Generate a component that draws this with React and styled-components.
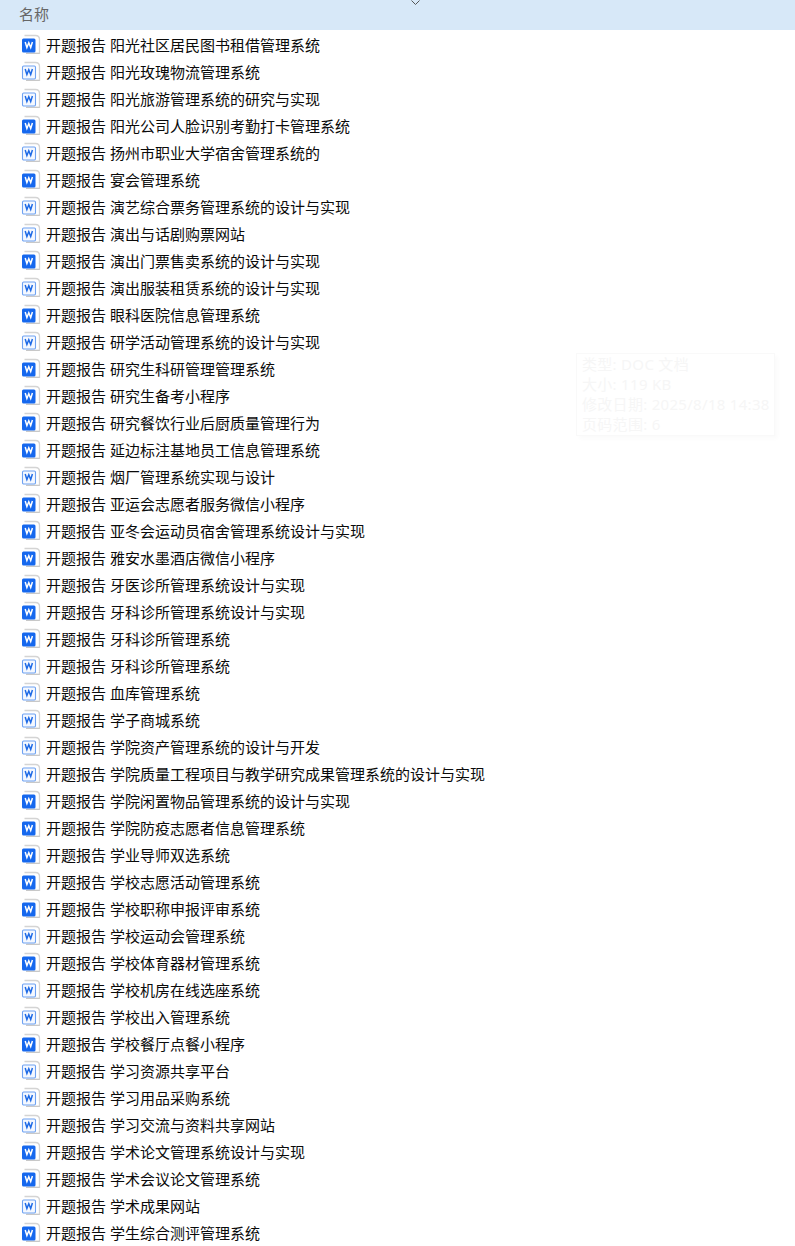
import React from "react";
import styled, { createGlobalStyle } from "styled-components";

const GlobalStyle = createGlobalStyle`
  html, body { margin: 0; padding: 0; background: #fff; overflow: hidden; }
  body { width: 795px; height: 1246px; }
`;
const Page = styled.div`
  position: relative; width: 795px; height: 1246px; overflow: hidden; background: #fff;
  font-family: "Noto Sans CJK SC", "Liberation Sans", sans-serif;
`;
const Header = styled.div`
  position: relative; height: 30px; background: #d7e8f8; color: #666; font-size: 15px;
  line-height: 27px; padding-left: 19px;
`;
const Chevron = styled.svg`
  position: absolute; left: 410px; top: 0; width: 11px; height: 6px;
`;
const List = styled.ul`
  list-style: none; margin: 0; padding: 1px 0 0 21px;
`;
const Row = styled.li`
  display: flex; align-items: center; height: 27px; gap: 5px;
`;
const IconSvg = styled.svg`
  flex: none; width: 20px; height: 20px; margin-bottom: 2px;
`;
const Name = styled.span`
  font-size: 15px; line-height: 27px; color: #0a0a0a; word-spacing: 0.6px; white-space: nowrap;
`;
const Tip = styled.div`
  position: absolute; left: 576px; top: 353px; width: 199px; height: 83px; box-sizing: border-box;
  border: 1px solid #f9f9f9; background: #fff; box-shadow: 3px 3px 4px rgba(0,0,0,0.02);
  padding: 0 5px; color: #f6f6f6; font-size: 15px; line-height: 20px;
  font-family: "Noto Sans", "Noto Sans CJK SC", sans-serif; letter-spacing: 0.3px;
`;
const TipLine = styled.div`white-space: nowrap;`;

const DocIcon = ({ solid }) => (
  <IconSvg viewBox="0 0 20 20" fill="none">
    <path d="M3.5 1.5H14.5C17 1.5 18.5 3 18.5 5.5V19.5H5.5" fill="#fff" stroke="#d4d4d4" strokeWidth="1.3" />
    <path d="M5 19.5H18.5" stroke="#c8c8c8" strokeWidth="1.3" />
    {solid ? (
      <rect x="1" y="4.5" width="13.5" height="14" rx="1.5" fill="#1668ee" />
    ) : (
      <rect x="1.5" y="5" width="13" height="13" rx="1.2" fill="#f4f8ff" stroke="#6ea2f2" strokeWidth="1.1" />
    )}
    <path
      d="M4.2 8 5.9 13.6 7.8 8.8 9.7 13.6 11.4 8"
      stroke={solid ? "#fff" : "#1e6ae6"}
      strokeWidth="1.5"
    />
  </IconSvg>
);

const rows = [
  ["阳光社区居民图书租借管理系统", 1],
  ["阳光玫瑰物流管理系统", 0],
  ["阳光旅游管理系统的研究与实现", 0],
  ["阳光公司人脸识别考勤打卡管理系统", 1],
  ["扬州市职业大学宿舍管理系统的", 0],
  ["宴会管理系统", 1],
  ["演艺综合票务管理系统的设计与实现", 0],
  ["演出与话剧购票网站", 0],
  ["演出门票售卖系统的设计与实现", 1],
  ["演出服装租赁系统的设计与实现", 0],
  ["眼科医院信息管理系统", 1],
  ["研学活动管理系统的设计与实现", 0],
  ["研究生科研管理管理系统", 1],
  ["研究生备考小程序", 1],
  ["研究餐饮行业后厨质量管理行为", 1],
  ["延边标注基地员工信息管理系统", 1],
  ["烟厂管理系统实现与设计", 0],
  ["亚运会志愿者服务微信小程序", 1],
  ["亚冬会运动员宿舍管理系统设计与实现", 1],
  ["雅安水墨酒店微信小程序", 1],
  ["牙医诊所管理系统设计与实现", 1],
  ["牙科诊所管理系统设计与实现", 1],
  ["牙科诊所管理系统", 1],
  ["牙科诊所管理系统", 0],
  ["血库管理系统", 0],
  ["学子商城系统", 0],
  ["学院资产管理系统的设计与开发", 0],
  ["学院质量工程项目与教学研究成果管理系统的设计与实现", 0],
  ["学院闲置物品管理系统的设计与实现", 1],
  ["学院防疫志愿者信息管理系统", 1],
  ["学业导师双选系统", 1],
  ["学校志愿活动管理系统", 1],
  ["学校职称申报评审系统", 1],
  ["学校运动会管理系统", 0],
  ["学校体育器材管理系统", 1],
  ["学校机房在线选座系统", 0],
  ["学校出入管理系统", 0],
  ["学校餐厅点餐小程序", 1],
  ["学习资源共享平台", 0],
  ["学习用品采购系统", 0],
  ["学习交流与资料共享网站", 0],
  ["学术论文管理系统设计与实现", 1],
  ["学术会议论文管理系统", 1],
  ["学术成果网站", 0],
  ["学生综合测评管理系统", 1],
];

export default function App() {
  return (
    <Page>
      <GlobalStyle />
      <Header>
        名称
        <Chevron viewBox="0 0 11 6" fill="none">
          <path d="M1.5 0.5 5.5 4.5 9.5 0.5" stroke="#555" strokeWidth="1" />
        </Chevron>
      </Header>
      <List>
        {rows.map(([name, solid], i) => (
          <Row key={i}>
            <DocIcon solid={!!solid} />
            <Name>开题报告 {name}</Name>
          </Row>
        ))}
      </List>
      <Tip>
        <TipLine>类型: DOC 文档</TipLine>
        <TipLine>大小: 119 KB</TipLine>
        <TipLine>修改日期: 2025/8/18 14:38</TipLine>
        <TipLine>页码范围: 6</TipLine>
      </Tip>
    </Page>
  );
}
